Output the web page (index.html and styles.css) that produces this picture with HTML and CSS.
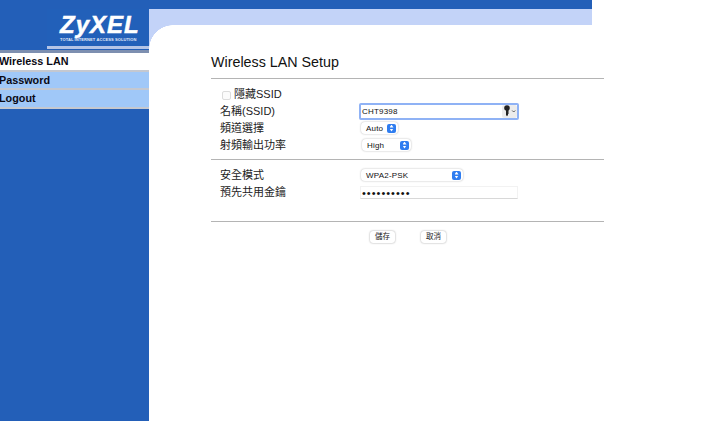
FILE: index.html
```html
<!DOCTYPE html>
<html lang="zh-Hant">
<head>
<meta charset="utf-8">
<title>Wireless LAN Setup</title>
<link rel="stylesheet" href="styles.css">
</head>
<body>
<aside class="sidebar">
  <div class="logo-area">
    <div class="logo">
      <div class="logo-name">ZyXEL</div>
      <div class="logo-tag">Total Internet Access Solution</div>
    </div>
  </div>
  <nav class="nav">
    <a class="nav-item active">Wireless LAN</a>
    <a class="nav-item">Password</a>
    <a class="nav-item">Logout</a>
  </nav>
</aside>
<main class="main">
  <div class="top-bar"></div>
  <div class="band"></div>
  <div class="panel">
    <div class="content">
      <h1 class="title">Wireless LAN Setup</h1>
      <hr class="rule">
      <section class="group first">
        <div class="row check-row">
          <span class="checkbox"></span><span class="label">隱藏SSID</span>
        </div>
        <div class="row">
          <span class="label">名稱(SSID)</span>
          <div class="ssid-field">
            <span class="val">CHT9398</span>
            <span class="key">
              <svg width="14" height="12" viewBox="0 0 14 12"><circle cx="4" cy="3" r="2.8" fill="#222"/><path d="M3 4h2v1.5h1v1H5v1h1v1H5V10l-1 1.2L3 10z" fill="#222"/><path d="M9.2 5.5l1.5 1.5 1.5-1.5" fill="none" stroke="#555" stroke-width="1"/></svg>
            </span>
          </div>
        </div>
        <div class="row">
          <span class="label">頻道選擇</span>
          <div class="select sel-auto"><span class="val">Auto</span><span class="stepper"></span></div>
        </div>
        <div class="row">
          <span class="label">射頻輸出功率</span>
          <div class="select sel-high"><span class="val">High</span><span class="stepper"></span></div>
        </div>
      </section>
      <hr class="rule">
      <section class="group second">
        <div class="row">
          <span class="label">安全模式</span>
          <div class="select sel-wpa"><span class="val">WPA2-PSK</span><span class="stepper"></span></div>
        </div>
        <div class="row">
          <span class="label">預先共用金鑰</span>
          <div class="pass-field">••••••••••</div>
        </div>
      </section>
      <hr class="rule">
      <div class="actions">
        <button class="btn">儲存</button>
        <button class="btn">取消</button>
      </div>
    </div>
  </div>
</main>
</body>
</html>
```
FILE: styles.css
```css
* { box-sizing: border-box; }
html, body { margin: 0; height: 100%; }
body {
  display: flex;
  width: 720px;
  height: 421px;
  overflow: hidden;
  background: #fff;
  font-family: "Liberation Sans", "Noto Sans CJK TC", sans-serif;
  color: #111;
}
.sidebar {
  width: 149px;
  flex: none;
  background: #235fb8;
}
.logo-area {
  height: 53px;
  padding: 9px 0 0 47px;
  border-bottom: 3px solid #7d8fb0;
}
.logo {
  height: 40px;
  border-bottom: 3px solid #b4c4e6;
  padding-left: 13px;
  background: #2260b9;
}
.logo-name {
  color: #fff;
  font: italic bold 24px/24px "Liberation Sans", sans-serif;
  -webkit-text-stroke: 0.5px #fff;
  padding-top: 4px;
  letter-spacing: 1px;
  height: 28px;
}
.logo-tag {
  color: #e2e9f7;
  font: bold 4px/6px "Liberation Sans", sans-serif;
  text-transform: uppercase;
  white-space: nowrap;
  letter-spacing: 0.1px;
}
.nav { display: flex; flex-direction: column; }
.nav-item {
  height: 18.5px;
  font-weight: bold;
  font-size: 10.8px;
  line-height: 16px;
  color: #0a0a14;
  background: #a0c8f8;
  border-bottom: 2px solid #c4c8d0;
  margin-left: -1px;
}
.nav-item.active { background: #fff; }
.main { width: 571px; flex: none; display: flex; flex-direction: column; }
.top-bar { height: 9px; width: 443px; background: #235fb8; flex: none; }
.band { height: 16px; width: 443px; background: #c3d3f8; flex: none; }
.panel { flex: 1; position: relative; }
.panel::before {
  content: "";
  position: absolute;
  left: 0;
  top: 0;
  width: 24px;
  height: 24px;
  background: radial-gradient(circle at 100% 100%, #fff 23.5px, #c3d3f8 24px);
}
.content {
  position: relative;
  padding: 28px 0 0 62px;
  width: 455px;
}
.title {
  margin: 0;
  font-size: 14.3px;
  font-weight: normal;
  line-height: 18px;
  color: #111;
}
.rule {
  margin: 0;
  height: 1px;
  border: 0;
  background: #b4b4b4;
  width: 393px;
}
.title + .rule { margin-top: 7px; }
.group { padding-left: 9px; display: flex; flex-direction: column; }
.group.first { padding-top: 7px; height: 80px; }
.group.second { padding-top: 7px; height: 61px; }
.row { display: flex; align-items: center; height: 17px; }
.label { font-size: 11px; line-height: 17px; width: 140px; flex: none; color: #222; }
.check-row .label { width: auto; }
.checkbox {
  width: 9px;
  height: 9px;
  margin: 1px 3px 0 2px;
  border: 1px solid #dcdcdc;
  border-radius: 2px;
  background: #fbfbfb;
}
.val { font-size: 8px; letter-spacing: 0.2px; color: #111; }
.ssid-field {
  width: 160px;
  height: 17px;
  margin: -1px 0 0 -1px;
  border: 2px solid #8fb2f5;
  border-radius: 2px;
  display: flex;
  align-items: center;
  justify-content: space-between;
  padding-left: 1px;
  background: #fff;
}
.key {
  width: 15px;
  height: 13px;
  background: #ececec;
  border-radius: 2px;
  display: flex;
  align-items: center;
  justify-content: center;
}
.select {
  height: 12px;
  margin-top: -1px;
  display: flex;
  align-items: center;
  justify-content: space-between;
  background: #fff;
  border-radius: 4px;
  box-shadow: 0 0 2px rgba(0,0,0,.3);
  padding: 0 2px 0 5px;
}
.sel-auto { width: 37px; margin-left: 1px; }
.sel-high { width: 49px; margin-left: 2px; }
.sel-wpa { width: 102px; margin-left: 1px; }
.stepper {
  width: 9px;
  height: 9px;
  border-radius: 2px;
  background: #2f7df0;
  position: relative;
}
.stepper::before, .stepper::after {
  content: "";
  position: absolute;
  left: 2.5px;
  width: 4px;
  height: 3px;
  background: #fff;
}
.stepper::before { top: 1px; clip-path: polygon(50% 0, 100% 100%, 0 100%); }
.stepper::after { bottom: 1px; clip-path: polygon(0 0, 100% 0, 50% 100%); }
.pass-field {
  width: 158px;
  height: 13px;
  margin-top: -1px;
  font: 11px/12px "Liberation Sans", sans-serif;
  padding-left: 1px;
  letter-spacing: 1px;
  background: #fff;
  border: 1px solid #f2f2f2;
  border-bottom-color: #d8d8d8;
  color: #111;
}
.actions {
  display: flex;
  gap: 26px;
  padding: 9px 0 0 159px;
}
.btn {
  width: 25px;
  height: 12px;
  padding: 0;
  border: 0;
  border-radius: 3px;
  background: #fff;
  box-shadow: 0 0 2px rgba(0,0,0,.4);
  font: 7.5px/12px "Liberation Sans", "Noto Sans CJK TC", sans-serif;
  color: #222;
}
```
